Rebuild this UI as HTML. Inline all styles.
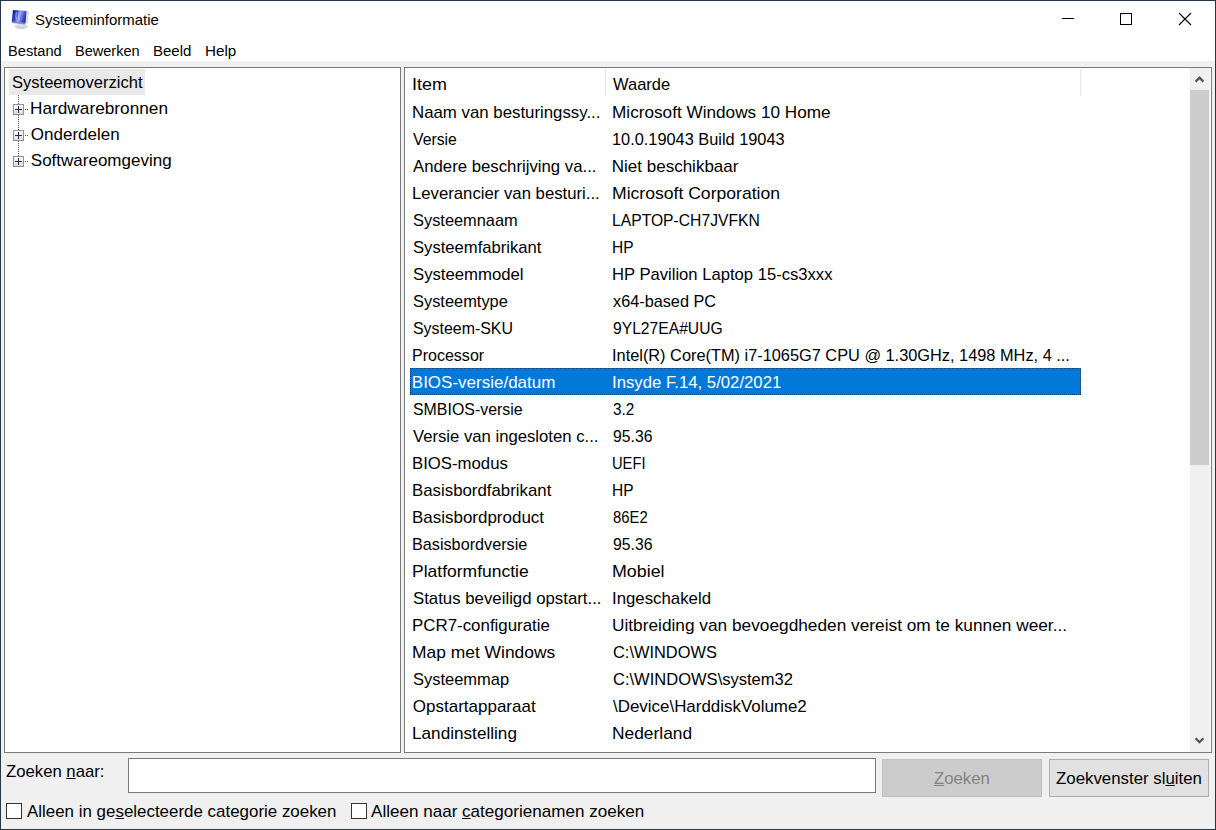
<!DOCTYPE html>
<html><head><meta charset="utf-8"><title>Systeeminformatie</title>
<style>
html,body{margin:0;padding:0}
body{width:1216px;height:830px;overflow:hidden;position:relative;background:#f0f0f0;font-family:"Liberation Sans",sans-serif}
.t{position:absolute;white-space:pre;font-family:"Liberation Sans",sans-serif;transform-origin:0 0}
.b{position:absolute;box-sizing:border-box}
u{text-decoration:underline;text-underline-offset:1px;text-decoration-thickness:1px}
</style></head><body>
<div class="b" style="left:0px;top:0px;width:1216px;height:61px;background:#fff"></div>
<svg class="b" style="left:8px;top:6px" width="24" height="26" viewBox="0 0 24 26">
<defs><linearGradient id="scr" x1="0" y1="0" x2="1" y2="0.3"><stop offset="0" stop-color="#0c0c90"/><stop offset="0.35" stop-color="#3040c8"/><stop offset="0.6" stop-color="#9aa4f0"/><stop offset="0.8" stop-color="#5a66d8"/><stop offset="1" stop-color="#2a36b0"/></linearGradient>
<linearGradient id="st" x1="0" y1="0" x2="0" y2="1"><stop offset="0" stop-color="#e4e6ee"/><stop offset="1" stop-color="#c4c8d4"/></linearGradient></defs>
<ellipse cx="13" cy="20.3" rx="6.4" ry="2.6" fill="url(#st)"/>
<path d="M4.6 3.8 L20.8 4.9 L20.2 17.8 L3.2 16.2 Z" fill="#dfe2ec"/>
<path d="M5 4.1 L18.5 5 L17.6 16.9 L3.8 15.4 Z" fill="url(#scr)"/>
<path d="M8.5 6 Q7 10 8.6 14 M11.2 6.2 Q10 10 11.4 14.6" stroke="#c8d0ff" stroke-width="1.1" fill="none" opacity="0.6"/>
<path d="M3.8 15.4 L17.6 16.9 L17 18.5 L4 17 Z" fill="#1a1a8a" opacity="0.5"/>
</svg>
<div class="b" style="left:1062px;top:18px;width:12px;height:1px;background:#000"></div>
<div class="b" style="left:1120px;top:13px;width:12px;height:12px;border:1px solid #000"></div>
<svg class="b" style="left:1178px;top:12px" width="14" height="14" viewBox="0 0 14 14"><path d="M1 1 L13 13 M13 1 L1 13" stroke="#000" stroke-width="1.1"/></svg>
<div class="b" style="left:4px;top:67px;width:397px;height:686px;background:#fff;border:1px solid #7a7a7a"></div>
<div class="b" style="left:9px;top:69px;width:136px;height:26px;background:#e9e9e9"></div>
<div class="b" style="left:18px;top:95px;width:1px;height:66px;background:repeating-linear-gradient(to bottom,#5a5a5a 0 1px,transparent 1px 2px)"></div>
<div class="b" style="left:25px;top:109px;width:4px;height:1px;background:repeating-linear-gradient(to right,#5a5a5a 0 1px,transparent 1px 2px)"></div>
<div class="b" style="left:13px;top:104px;width:11px;height:11px;border:1px solid #919191;background:linear-gradient(#fcfcfc,#dcdcdc)"></div>
<div class="b" style="left:15px;top:109px;width:7px;height:1px;background:#1e2f4a"></div>
<div class="b" style="left:18px;top:106px;width:1px;height:7px;background:#1e2f4a"></div>
<div class="b" style="left:25px;top:135px;width:4px;height:1px;background:repeating-linear-gradient(to right,#5a5a5a 0 1px,transparent 1px 2px)"></div>
<div class="b" style="left:13px;top:130px;width:11px;height:11px;border:1px solid #919191;background:linear-gradient(#fcfcfc,#dcdcdc)"></div>
<div class="b" style="left:15px;top:135px;width:7px;height:1px;background:#1e2f4a"></div>
<div class="b" style="left:18px;top:132px;width:1px;height:7px;background:#1e2f4a"></div>
<div class="b" style="left:25px;top:161px;width:4px;height:1px;background:repeating-linear-gradient(to right,#5a5a5a 0 1px,transparent 1px 2px)"></div>
<div class="b" style="left:13px;top:156px;width:11px;height:11px;border:1px solid #919191;background:linear-gradient(#fcfcfc,#dcdcdc)"></div>
<div class="b" style="left:15px;top:161px;width:7px;height:1px;background:#1e2f4a"></div>
<div class="b" style="left:18px;top:158px;width:1px;height:7px;background:#1e2f4a"></div>
<div class="b" style="left:404px;top:67px;width:808px;height:686px;background:#fff;border:1px solid #7a7a7a"></div>
<div class="b" style="left:605px;top:69px;width:1px;height:27px;background:#e5e5e5"></div>
<div class="b" style="left:1080px;top:69px;width:1px;height:27px;background:#e5e5e5"></div>
<div class="b" style="left:410px;top:368px;width:671px;height:27px;background:#0078d7;outline:1px dotted #003a6a;outline-offset:-1px"></div>
<div class="b" style="left:1190px;top:68px;width:20px;height:684px;background:#f0f0f0"></div>
<div class="b" style="left:1190px;top:90px;width:19px;height:375px;background:#cdcdcd"></div>
<svg class="b" style="left:1190px;top:68px" width="20" height="22" viewBox="0 0 20 22"><path d="M5.6 13.6 L9.5 9.6 L13.4 13.6" stroke="#555" stroke-width="2.3" fill="none"/></svg>
<svg class="b" style="left:1190px;top:730px" width="20" height="22" viewBox="0 0 20 22"><path d="M5.6 8.2 L9.5 12.2 L13.4 8.2" stroke="#555" stroke-width="2.3" fill="none"/></svg>
<div class="b" style="left:128px;top:758px;width:748px;height:35px;background:#fff;border:1px solid #7a7a7a"></div>
<div class="b" style="left:882px;top:759px;width:160px;height:38px;background:#cccccc;border:1px solid #bfbfbf"></div>
<div class="b" style="left:1049px;top:759px;width:160px;height:38px;background:#e1e1e1;border:1px solid #adadad"></div>
<div class="b" style="left:6px;top:803px;width:16px;height:16px;background:#fff;border:1px solid #333"></div>
<div class="b" style="left:351px;top:803px;width:16px;height:16px;background:#fff;border:1px solid #333"></div>
<div class="t" style="left:34.80px;top:13px;font-size:14.8px;line-height:14.8px;color:#000;transform:scaleX(1.0106);">Systeeminformatie</div>
<div class="t" style="left:7.56px;top:44px;font-size:14px;line-height:14px;color:#000;transform:scaleX(1.0447);">Bestand</div>
<div class="t" style="left:74.96px;top:44px;font-size:14px;line-height:14px;color:#000;transform:scaleX(1.0386);">Bewerken</div>
<div class="t" style="left:152.73px;top:44px;font-size:14px;line-height:14px;color:#000;transform:scaleX(1.0699);">Beeld</div>
<div class="t" style="left:204.91px;top:44px;font-size:14px;line-height:14px;color:#000;transform:scaleX(1.0854);">Help</div>
<div class="t" style="left:11.50px;top:74px;font-size:17px;line-height:17px;color:#000;transform:scaleX(0.9730);">Systeemoverzicht</div>
<div class="t" style="left:29.79px;top:100px;font-size:17px;line-height:17px;color:#000;transform:scaleX(1.0139);">Hardwarebronnen</div>
<div class="t" style="left:30.80px;top:126px;font-size:17px;line-height:17px;color:#000;">Onderdelen</div>
<div class="t" style="left:30.80px;top:152px;font-size:17px;line-height:17px;color:#000;">Softwareomgeving</div>
<div class="t" style="left:411.75px;top:76px;font-size:17px;line-height:17px;color:#000;transform:scaleX(1.0533);">Item</div>
<div class="t" style="left:612.70px;top:76px;font-size:17px;line-height:17px;color:#000;transform:scaleX(0.9702);">Waarde</div>
<div class="t" style="left:411.81px;top:104px;font-size:17px;line-height:17px;color:#000;transform:scaleX(0.9888);">Naam van besturingssy...</div>
<div class="t" style="left:611.79px;top:104px;font-size:17px;line-height:17px;color:#000;transform:scaleX(1.0108);">Microsoft Windows 10 Home</div>
<div class="t" style="left:412.80px;top:131px;font-size:17px;line-height:17px;color:#000;transform:scaleX(0.9275);">Versie</div>
<div class="t" style="left:611.84px;top:131px;font-size:17px;line-height:17px;color:#000;transform:scaleX(0.9610);">10.0.19043 Build 19043</div>
<div class="t" style="left:412.80px;top:158px;font-size:17px;line-height:17px;color:#000;transform:scaleX(0.9858);">Andere beschrijving va...</div>
<div class="t" style="left:611.80px;top:158px;font-size:17px;line-height:17px;color:#000;">Niet beschikbaar</div>
<div class="t" style="left:411.82px;top:185px;font-size:17px;line-height:17px;color:#000;transform:scaleX(0.9833);">Leverancier van besturi...</div>
<div class="t" style="left:611.77px;top:185px;font-size:17px;line-height:17px;color:#000;transform:scaleX(1.0338);">Microsoft Corporation</div>
<div class="t" style="left:412.80px;top:212px;font-size:17px;line-height:17px;color:#000;transform:scaleX(0.9641);">Systeemnaam</div>
<div class="t" style="left:611.88px;top:212px;font-size:17px;line-height:17px;color:#000;transform:scaleX(0.9221);">LAPTOP-CH7JVFKN</div>
<div class="t" style="left:412.80px;top:239px;font-size:17px;line-height:17px;color:#000;transform:scaleX(0.9779);">Systeemfabrikant</div>
<div class="t" style="left:611.89px;top:239px;font-size:17px;line-height:17px;color:#000;transform:scaleX(0.9113);">HP</div>
<div class="t" style="left:412.80px;top:266px;font-size:17px;line-height:17px;color:#000;transform:scaleX(0.9834);">Systeemmodel</div>
<div class="t" style="left:611.82px;top:266px;font-size:17px;line-height:17px;color:#000;transform:scaleX(0.9776);">HP Pavilion Laptop 15-cs3xxx</div>
<div class="t" style="left:412.80px;top:293px;font-size:17px;line-height:17px;color:#000;transform:scaleX(0.9651);">Systeemtype</div>
<div class="t" style="left:612.80px;top:293px;font-size:17px;line-height:17px;color:#000;transform:scaleX(0.9567);">x64-based PC</div>
<div class="t" style="left:412.80px;top:320px;font-size:17px;line-height:17px;color:#000;transform:scaleX(0.9367);">Systeem-SKU</div>
<div class="t" style="left:612.80px;top:320px;font-size:17px;line-height:17px;color:#000;transform:scaleX(0.9207);">9YL27EA#UUG</div>
<div class="t" style="left:411.86px;top:347px;font-size:17px;line-height:17px;color:#000;transform:scaleX(0.9425);">Processor</div>
<div class="t" style="left:611.84px;top:347px;font-size:17px;line-height:17px;color:#000;transform:scaleX(0.9611);">Intel(R) Core(TM) i7-1065G7 CPU @ 1.30GHz, 1498 MHz, 4 ...</div>
<div class="t" style="left:411.80px;top:374px;font-size:17px;line-height:17px;color:#fff;">BIOS-versie/datum</div>
<div class="t" style="left:611.82px;top:374px;font-size:17px;line-height:17px;color:#fff;transform:scaleX(0.9838);">Insyde F.14, 5/02/2021</div>
<div class="t" style="left:412.80px;top:401px;font-size:17px;line-height:17px;color:#000;transform:scaleX(0.9359);">SMBIOS-versie</div>
<div class="t" style="left:612.80px;top:401px;font-size:17px;line-height:17px;color:#000;transform:scaleX(0.8974);">3.2</div>
<div class="t" style="left:412.80px;top:428px;font-size:17px;line-height:17px;color:#000;transform:scaleX(0.9810);">Versie van ingesloten c...</div>
<div class="t" style="left:612.80px;top:428px;font-size:17px;line-height:17px;color:#000;transform:scaleX(0.9267);">95.36</div>
<div class="t" style="left:411.81px;top:455px;font-size:17px;line-height:17px;color:#000;transform:scaleX(0.9853);">BIOS-modus</div>
<div class="t" style="left:611.94px;top:455px;font-size:17px;line-height:17px;color:#000;transform:scaleX(0.8649);">UEFI</div>
<div class="t" style="left:411.81px;top:482px;font-size:17px;line-height:17px;color:#000;transform:scaleX(0.9895);">Basisbordfabrikant</div>
<div class="t" style="left:611.89px;top:482px;font-size:17px;line-height:17px;color:#000;transform:scaleX(0.9113);">HP</div>
<div class="t" style="left:411.80px;top:509px;font-size:17px;line-height:17px;color:#000;transform:scaleX(0.9979);">Basisbordproduct</div>
<div class="t" style="left:612.80px;top:509px;font-size:17px;line-height:17px;color:#000;transform:scaleX(0.8739);">86E2</div>
<div class="t" style="left:411.85px;top:536px;font-size:17px;line-height:17px;color:#000;transform:scaleX(0.9532);">Basisbordversie</div>
<div class="t" style="left:612.80px;top:536px;font-size:17px;line-height:17px;color:#000;transform:scaleX(0.9267);">95.36</div>
<div class="t" style="left:411.77px;top:563px;font-size:17px;line-height:17px;color:#000;transform:scaleX(1.0293);">Platformfunctie</div>
<div class="t" style="left:611.75px;top:563px;font-size:17px;line-height:17px;color:#000;transform:scaleX(1.0497);">Mobiel</div>
<div class="t" style="left:412.80px;top:590px;font-size:17px;line-height:17px;color:#000;transform:scaleX(0.9876);">Status beveiligd opstart...</div>
<div class="t" style="left:611.81px;top:590px;font-size:17px;line-height:17px;color:#000;transform:scaleX(0.9886);">Ingeschakeld</div>
<div class="t" style="left:411.81px;top:617px;font-size:17px;line-height:17px;color:#000;transform:scaleX(0.9931);">PCR7-configuratie</div>
<div class="t" style="left:611.78px;top:617px;font-size:17px;line-height:17px;color:#000;transform:scaleX(1.0158);">Uitbreiding van bevoegdheden vereist om te kunnen weer...</div>
<div class="t" style="left:411.78px;top:644px;font-size:17px;line-height:17px;color:#000;transform:scaleX(1.0244);">Map met Windows</div>
<div class="t" style="left:612.80px;top:644px;font-size:17px;line-height:17px;color:#000;transform:scaleX(0.9645);">C:\WINDOWS</div>
<div class="t" style="left:412.80px;top:671px;font-size:17px;line-height:17px;color:#000;transform:scaleX(0.9691);">Systeemmap</div>
<div class="t" style="left:612.80px;top:671px;font-size:17px;line-height:17px;color:#000;transform:scaleX(0.9720);">C:\WINDOWS\system32</div>
<div class="t" style="left:412.80px;top:698px;font-size:17px;line-height:17px;color:#000;">Opstartapparaat</div>
<div class="t" style="left:612.80px;top:698px;font-size:17px;line-height:17px;color:#000;transform:scaleX(0.9954);">\Device\HarddiskVolume2</div>
<div class="t" style="left:411.79px;top:725px;font-size:17px;line-height:17px;color:#000;transform:scaleX(1.0096);">Landinstelling</div>
<div class="t" style="left:611.78px;top:725px;font-size:17px;line-height:17px;color:#000;transform:scaleX(1.0209);">Nederland</div>
<div class="t" style="left:6.30px;top:763px;font-size:17px;line-height:17px;color:#000;transform:scaleX(0.9824);">Zoeken <u>n</u>aar:</div>
<div class="t" style="left:934.00px;top:770px;font-size:17px;line-height:17px;color:#838383;transform:scaleX(0.9849);"><u>Z</u>oeken</div>
<div class="t" style="left:1055.50px;top:770px;font-size:17px;line-height:17px;color:#000;transform:scaleX(0.9901);">Zoekvenster sl<u>u</u>iten</div>
<div class="t" style="left:27.00px;top:803px;font-size:17px;line-height:17px;color:#000;transform:scaleX(0.9952);">Alleen in ge<u>s</u>electeerde categorie zoeken</div>
<div class="t" style="left:371.30px;top:803px;font-size:17px;line-height:17px;color:#000;transform:scaleX(1.0036);">Alleen naar <u>c</u>ategorienamen zoeken</div>
<div class="b" style="left:0px;top:0px;width:1216px;height:830px;border:1px solid #223748"></div>
</body></html>
